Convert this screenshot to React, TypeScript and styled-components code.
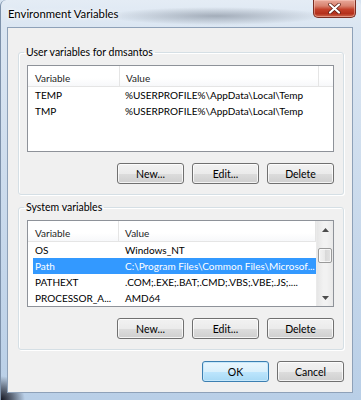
import styled, { createGlobalStyle } from "styled-components";

const GlobalStyle = createGlobalStyle`
  html, body {
    margin: 0;
    padding: 0;
    background: #d6e3f1;
  }
  body {
    font-family: Lato, "Noto Sans", sans-serif;
    font-size: 10px;
    color: #000;
  }
`;

const Window = styled.div`
  box-sizing: border-box;
  width: 361px;
  height: 400px;
  display: flex;
  flex-direction: column;
  padding: 0 8px 7px 6px;
  border-radius: 6px 6px 0 0;
  border-left: 1px solid #7d91aa;
  background:
    radial-gradient(circle at 0 100%, rgba(10, 10, 20, 0.95) 0, rgba(10, 10, 20, 0.5) 12px, transparent 24px),
    radial-gradient(ellipse 110px 9px at 215px 16px, rgba(90, 100, 115, 0.45), transparent),
    linear-gradient(180deg, #e4ecf5 0, #dbe6f2 27px, #c7d8eb 60%, #b9cfe7 100%);
  overflow: hidden;
`;

const TitleBar = styled.div`
  height: 27px;
  flex-shrink: 0;
  display: flex;
  align-items: flex-start;
  justify-content: space-between;
`;

const Title = styled.span`
  margin: 7px 0 0 1px;
  font-size: 11.3px;
  line-height: 14px;
  color: #000;
  text-shadow: 0 0 6px #fff, 0 0 3px #fff;
`;

const CloseButton = styled.div`
  box-sizing: border-box;
  width: 43px;
  height: 18px;
  margin-right: -3px;
  display: flex;
  align-items: center;
  justify-content: center;
  border: 1px solid #7a2d22;
  border-top: none;
  border-radius: 0 0 5px 5px;
  background: linear-gradient(180deg, #e9a99a 0, #d8826f 35%, #c4412a 55%, #b4301c 80%, #cf6a4f 100%);
  box-shadow: inset 0 0 0 1px rgba(255, 210, 200, 0.45);
`;

const Client = styled.div`
  flex: 1;
  box-sizing: border-box;
  display: flex;
  flex-direction: column;
  padding: 16px 8px 0 10px;
  border: 1px solid #8ea1b8;
  background: #f0f0f0;
`;

const Group = styled.fieldset<{ $top: number }>`
  margin: ${(p) => p.$top}px 0 0;
  padding: 5px 9px 10px 8px;
  min-width: 0;
  border: 1px solid #d5dfe5;
  border-radius: 3px;
  box-shadow: inset 1px 1px 0 #fff, 1px 1px 0 #fff;
  display: flex;
  flex-direction: column;
`;

const Legend = styled.legend`
  margin-left: -3px;
  padding: 0 2px;
  font-size: 10.5px;
  line-height: 16px;
  color: #000;
`;

const ListView = styled.div`
  box-sizing: border-box;
  height: 87px;
  display: flex;
  border: 1px solid #8e9299;
  background: #fff;
`;

const ListBody = styled.div`
  flex: 1;
  min-width: 0;
  display: flex;
  flex-direction: column;
`;

const Header = styled.div`
  height: 20px;
  flex-shrink: 0;
  display: flex;
  border-bottom: 1px solid #e5e5e5;
  background: linear-gradient(180deg, #ffffff 0, #ffffff 60%, #f7f8fa 100%);
`;

const HeaderCell = styled.div<{ $width?: number; $pad: number }>`
  box-sizing: border-box;
  ${(p) => (p.$width ? `width: ${p.$width}px;` : "flex: 1;")}
  padding: 4px 0 0 ${(p) => p.$pad}px;
  line-height: 16px;
  color: #1e1e1e;
  border-right: 1px solid #e5e5e5;
  &:last-child {
    border-right: none;
  }
`;

const Row = styled.div<{ $selected?: boolean }>`
  width: 284px;
  height: 16px;
  margin-left: 5px;
  display: flex;
  line-height: 16px;
  white-space: nowrap;
  color: ${(p) => (p.$selected ? "#fff" : "#000")};
  background: ${(p) => (p.$selected ? "#3399ff" : "transparent")};
  &:first-of-type {
    margin-top: 2px;
  }
`;

const Cell = styled.div<{ $width?: number }>`
  box-sizing: border-box;
  ${(p) => (p.$width ? `width: ${p.$width}px;` : "flex: 1;")}
  padding-left: 2px;
  overflow: hidden;
`;

const ScrollBar = styled.div`
  width: 16px;
  flex-shrink: 0;
  display: flex;
  flex-direction: column;
  background: linear-gradient(90deg, #e6e6e6 0, #f2f2f2 40%, #f2f2f2 60%, #e9e9e9 100%);
  border-left: 1px solid #eaeaea;
`;

const ArrowButton = styled.div`
  height: 17px;
  display: flex;
  align-items: center;
  justify-content: center;
`;

const Track = styled.div`
  flex: 1;
  padding-top: 10px;
`;

const Thumb = styled.div`
  box-sizing: border-box;
  height: 15px;
  margin: 0 1px;
  border: 1px solid #9a9a9a;
  border-radius: 2px;
  background: linear-gradient(90deg, #f3f3f3 0, #e8e8e8 50%, #d8d8d8 51%, #e2e2e2 100%);
  box-shadow: inset 0 0 0 1px rgba(255, 255, 255, 0.7);
`;

const ButtonRow = styled.div<{ $top: number }>`
  display: flex;
  justify-content: flex-end;
  gap: 8px;
  margin-top: ${(p) => p.$top}px;
`;

const Button = styled.button<{ $default?: boolean }>`
  box-sizing: border-box;
  width: 67px;
  height: 21px;
  padding: 0;
  font-family: inherit;
  font-size: 10.5px;
  color: #000;
  border-radius: 3px;
  border: 1px solid ${(p) => (p.$default ? "#3c7fb1" : "#707070")};
  background: ${(p) =>
    p.$default
      ? "linear-gradient(180deg, #eaf6fd 0, #d9f0fc 50%, #bee6fd 51%, #a7d9f5 100%)"
      : "linear-gradient(180deg, #f2f2f2 0, #ebebeb 50%, #dddddd 51%, #cfcfcf 100%)"};
  box-shadow: inset 0 0 0 1px ${(p) => (p.$default ? "#c6e8fb" : "rgba(255, 255, 255, 0.75)")};
`;

type Variable = { name: string; value: string; selected?: boolean };

const userVars: Variable[] = [
  { name: "TEMP", value: "%USERPROFILE%\\AppData\\Local\\Temp" },
  { name: "TMP", value: "%USERPROFILE%\\AppData\\Local\\Temp" },
];

const systemVars: Variable[] = [
  { name: "OS", value: "Windows_NT" },
  { name: "Path", value: "C:\\Program Files\\Common Files\\Microsof...", selected: true },
  { name: "PATHEXT", value: ".COM;.EXE;.BAT;.CMD;.VBS;.VBE;.JS;...." },
  { name: "PROCESSOR_A...", value: "AMD64" },
];

const Arrow = ({ up }: { up?: boolean }) => (
  <svg width="7" height="4" viewBox="0 0 7 4">
    <path d={up ? "M3.5 0 L7 4 L0 4 Z" : "M0 0 L7 0 L3.5 4 Z"} fill="#4d4d4d" />
  </svg>
);

const VariableList = ({ rows, scroll }: { rows: Variable[]; scroll?: boolean }) => (
  <ListView>
    <ListBody>
      <Header>
        <HeaderCell $width={92} $pad={7}>Variable</HeaderCell>
        <HeaderCell $width={199} $pad={6}>Value</HeaderCell>
        <HeaderCell $pad={0} />
      </Header>
      {rows.map((r) => (
        <Row key={r.name} $selected={r.selected}>
          <Cell $width={90}>{r.name}</Cell>
          <Cell>{r.value}</Cell>
        </Row>
      ))}
    </ListBody>
    {scroll && (
      <ScrollBar>
        <ArrowButton>
          <Arrow up />
        </ArrowButton>
        <Track>
          <Thumb />
        </Track>
        <ArrowButton>
          <Arrow />
        </ArrowButton>
      </ScrollBar>
    )}
  </ListView>
);

const ActionButtons = ({ top }: { top: number }) => (
  <ButtonRow $top={top}>
    <Button>New...</Button>
    <Button>Edit...</Button>
    <Button>Delete</Button>
  </ButtonRow>
);

export default function App() {
  return (
    <Window>
      <GlobalStyle />
      <TitleBar>
        <Title>Environment Variables</Title>
        <CloseButton>
          <svg width="13" height="11" viewBox="0 0 13 11">
            <path d="M2 1.5 L11 9.5 M11 1.5 L2 9.5" stroke="#5a1c12" strokeWidth="3.6" strokeLinecap="round" />
            <path d="M2 1.5 L11 9.5 M11 1.5 L2 9.5" stroke="#fff" strokeWidth="2.2" strokeLinecap="round" />
          </svg>
        </CloseButton>
      </TitleBar>
      <Client>
        <Group $top={0}>
          <Legend>User variables for dmsantos</Legend>
          <VariableList rows={userVars} />
          <ActionButtons top={11} />
        </Group>
        <Group $top={4}>
          <Legend>System variables</Legend>
          <VariableList rows={systemVars} scroll />
          <ActionButtons top={11} />
        </Group>
        <ButtonRow $top={11}>
          <Button $default>OK</Button>
          <Button>Cancel</Button>
        </ButtonRow>
      </Client>
    </Window>
  );
}
